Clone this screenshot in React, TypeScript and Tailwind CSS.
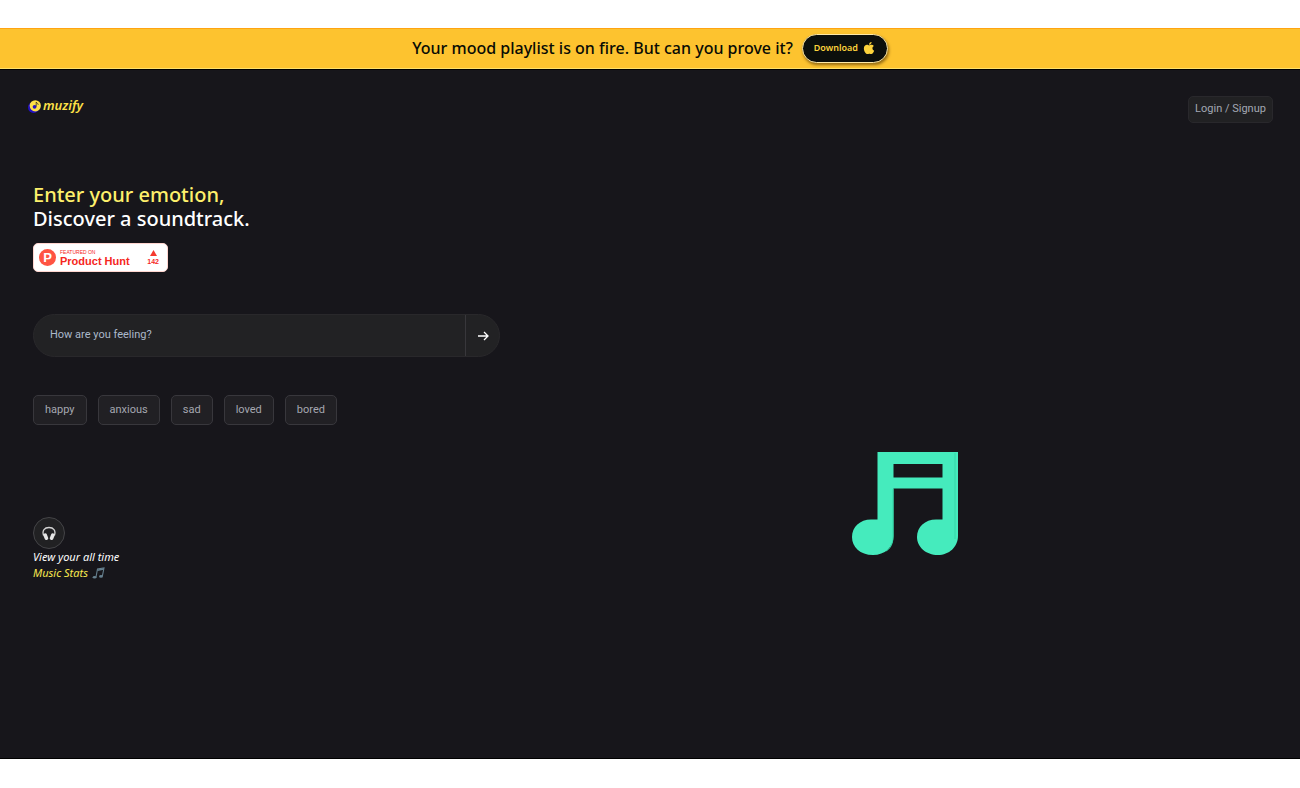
import { useState } from 'react';
import { FaApple } from 'react-icons/fa';

const MOODS = ['happy', 'anxious', 'sad', 'loved', 'bored'];

function Banner() {
  return (
    <div className="flex h-[41px] items-center justify-center gap-[9px] border-t border-b border-t-[#ffa411] border-b-[#ffe06a] bg-[#fdc32f] pb-px">
      <p className="text-[16px] font-medium text-[#080b05]">
        Your mood playlist is on fire. But can you prove it?
      </p>
      <button
        type="button"
        className="flex h-[29px] w-[86px] items-center justify-center gap-1 rounded-full border border-[#ffe9a5] bg-[#0c0f0c] text-[9px] font-semibold text-[#fdd33c] shadow-[1px_2px_3px_rgba(80,50,0,0.6)]"
      >
        Download
        <FaApple className="size-[14px]" />
      </button>
    </div>
  );
}

function Logo() {
  return (
    <a href="#" aria-label="muzify" className="flex h-5 items-center gap-[2px]">
      <svg viewBox="0 0 13 13" className="size-[13px]">
        <circle cx="5.6" cy="7.4" r="5.6" fill="#2412c4" />
        <circle cx="7.3" cy="5.8" r="5.6" fill="#fde047" />
        <circle cx="6.6" cy="6.8" r="1.9" fill="#2412c4" />
        <path d="M8.2 6.5V2c.4 1.2 2 1.1 2 2.8" fill="none" stroke="#17161b" strokeWidth="0.7" />
      </svg>
      <span className="text-[13px] font-semibold italic text-[#fde047]">muzify</span>
    </a>
  );
}

function ProductHuntBadge() {
  return (
    <a
      href="#"
      className="flex h-[29px] w-[135px] items-center rounded-[5px] border border-[#ffd5cf] bg-white pr-2 pl-[5px] font-['Liberation_Sans',sans-serif] text-[#f5271e]"
    >
      <span className="flex size-[17px] items-center justify-center rounded-full bg-[#ff5443] text-[13px] leading-none font-bold text-white">
        P
      </span>
      <span className="ml-1 flex flex-col">
        <span className="text-[5px] leading-[6px]">FEATURED ON</span>
        <span className="text-[11px] leading-[12px] font-bold whitespace-nowrap">Product Hunt</span>
      </span>
      <span className="ml-auto flex flex-col items-center gap-[2px]">
        <svg viewBox="0 0 7 6" className="h-[6px] w-[7px]">
          <path d="M3.5 0 7 6H0z" fill="#f5392e" />
        </svg>
        <span className="text-[7px] leading-[8px] font-bold">142</span>
      </span>
    </a>
  );
}

function HeadphonesIcon() {
  return (
    <svg viewBox="0 0 14 16" className="h-4 w-[14px]">
      <path d="M1.6 10.5C-.2 5.5 2.6 2.5 7 2.500S14.2 5.5 12.4 10.5" fill="none" stroke="#d4d4d4" strokeWidth="1.3" />
      <rect x="2" y="8.3" width="3.6" height="6.8" rx="1.6" fill="#e5e5e5" transform="rotate(-22 3.8 11.7)" />
      <rect x="8.4" y="8.3" width="3.6" height="6.8" rx="1.6" fill="#e5e5e5" transform="rotate(22 10.2 11.7)" />
    </svg>
  );
}

function NoteIcon() {
  return (
    <svg viewBox="0 0 13 12" className="h-3 w-[13px]">
      <path d="M4 10 5.5 2l6.5-1-1.6 8" fill="none" stroke="#66808f" strokeWidth="1.1" />
      <path d="M5.4 3.2 11.8 2" stroke="#66808f" strokeWidth="1.4" />
      <ellipse cx="2.6" cy="10.2" rx="1.9" ry="1.3" fill="#66808f" />
      <ellipse cx="9" cy="9.4" rx="1.9" ry="1.3" fill="#66808f" />
    </svg>
  );
}

function MusicNote() {
  return (
    <svg viewBox="0 0 106 103" className="h-[103px] w-[106px]">
      <path
        fill="#45ebbd"
        fillRule="evenodd"
        d="M25.5 0H106V84C106 95 97 103 86 103C74 103 65 95 65 85C65 75 73 67.5 84 67.5H90.5V36.5H41.5V84C41.5 95 33 103 21 103C8 103 0 95 0 85C0 75 8 67.5 19 67.5H25.5ZM41.5 12V25.5H90.5V12Z"
      />
      <path d="M41 37V85C41 92 38 97 34 99M103 1V87" fill="none" stroke="#36d7a8" strokeWidth="1" />
    </svg>
  );
}

export default function App() {
  const [feeling, setFeeling] = useState('');

  return (
    <div className="flex min-h-screen flex-col bg-white pt-7 pb-[29px] font-['Noto_Sans',sans-serif]">
      <Banner />
      <div className="flex flex-1 flex-col border-t border-b border-black bg-[#17161b]">
        <header className="flex items-start justify-between pt-[26px] pr-[27px] pl-7">
          <Logo />
          <button
            type="button"
            className="h-[27px] w-[85px] rounded-[5px] border border-[#29282c] bg-[#212123] font-['Roboto',sans-serif] text-[11px] text-[#a3a8b3]"
          >
            Login / Signup
          </button>
        </header>

        <main className="flex flex-1 px-[33px]">
          <section className="w-[467px] max-w-full pt-[60px]">
            <h1 className="text-[20px] leading-6 font-medium text-white">
              <span className="block text-[#fef06b]">Enter your emotion,</span>
              <span className="block">Discover a soundtrack.</span>
            </h1>

            <div className="mt-3">
              <ProductHuntBadge />
            </div>

            <form
              onSubmit={(e) => e.preventDefault()}
              className="mt-[42px] flex h-[43px] overflow-hidden rounded-full border border-[#29282b] bg-[#222224]"
            >
              <input
                type="text"
                aria-label="How are you feeling?"
                placeholder="How are you feeling?"
                value={feeling}
                onChange={(e) => setFeeling(e.target.value)}
                className="min-w-0 flex-1 bg-transparent px-4 font-['Roboto',sans-serif] text-[11px] text-white outline-none placeholder:text-[#abb8ca]"
              />
              <button
                type="submit"
                aria-label="Find music"
                className="flex w-[34px] items-center justify-center border-l border-[#38373b]"
              >
                <svg viewBox="0 0 12 10" className="h-[10px] w-3">
                  <path d="M1 5h10M7 1l4 4-4 4" fill="none" stroke="white" strokeWidth="1.3" />
                </svg>
              </button>
            </form>

            <div className="mt-[38px] flex gap-[11px]">
              {MOODS.map((mood) => (
                <button
                  key={mood}
                  type="button"
                  onClick={() => setFeeling(mood)}
                  className="h-[30px] rounded-[5px] border border-[#38373c] bg-[#212024] px-[11px] font-['Roboto',sans-serif] text-[11px] text-[#a5a7b0]"
                >
                  {mood}
                </button>
              ))}
            </div>

            <a href="#" className="mt-[92px] block w-fit text-[11px] leading-4 italic">
              <span className="flex size-8 items-center justify-center rounded-full border border-[#444447] bg-[#212123]">
                <HeadphonesIcon />
              </span>
              <span className="block text-white">View your all time</span>
              <span className="flex items-center gap-1 text-[#f7e84f]">
                Music Stats
                <NoteIcon />
              </span>
            </a>
          </section>

          <section className="ml-[43px] flex flex-1 items-center justify-center pt-[126px]">
            <MusicNote />
          </section>
        </main>
      </div>
    </div>
  );
}
